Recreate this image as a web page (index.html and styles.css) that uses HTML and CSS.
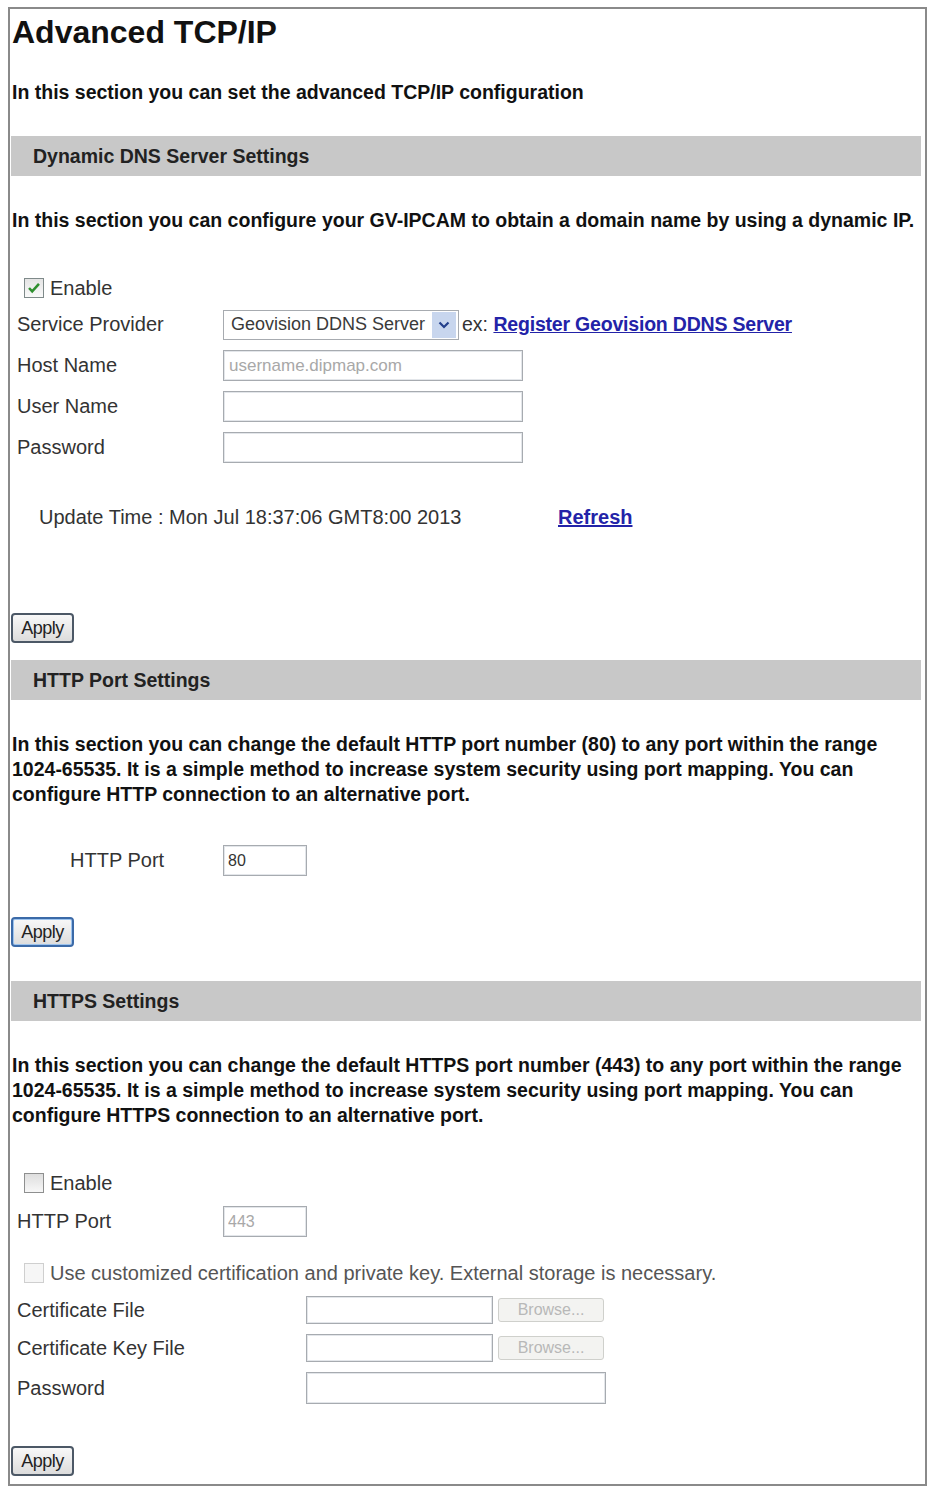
FILE: index.html
```html
<!DOCTYPE html>
<html lang="en">
<head>
  <meta charset="UTF-8">
  <title>Advanced TCP/IP</title>
  <link rel="stylesheet" href="styles.css">
</head>
<body>
<div class="page">
  <h1>Advanced TCP/IP</h1>
  <p class="intro">In this section you can set the advanced TCP/IP configuration</p>

  <!-- DDNS -->
  <div class="bar">Dynamic DNS Server Settings</div>
  <p class="desc">In this section you can configure your GV-IPCAM to obtain a domain name by using a dynamic IP.</p>
  <label class="check-row ddns-enable">
    <span class="cbox is-checked">
      <svg viewBox="0 0 20 20" width="20" height="20"><path d="M4.5 10l3.5 3.8L15.5 5.5" fill="none" stroke="#2f8f2f" stroke-width="2.8"/></svg>
    </span>
    Enable
  </label>
  <div class="form ddns-form">
    <div class="row">
      <span class="lbl">Service Provider</span>
      <span class="field">
        <span class="select">
          <span class="select-val">Geovision DDNS Server</span>
          <span class="select-btn">
            <svg viewBox="0 0 12 10" width="12" height="10"><path d="M1.5 2.5L6 7l4.5-4.5" fill="none" stroke="#24408c" stroke-width="2.2"/></svg>
          </span>
        </span>
        <span class="ex">ex: <a href="#">Register Geovision DDNS Server</a></span>
      </span>
    </div>
    <div class="row">
      <span class="lbl">Host Name</span>
      <span class="field"><input class="txt wide" type="text" placeholder="username.dipmap.com"></span>
    </div>
    <div class="row">
      <span class="lbl">User Name</span>
      <span class="field"><input class="txt wide" type="text"></span>
    </div>
    <div class="row">
      <span class="lbl">Password</span>
      <span class="field"><input class="txt wide" type="password"></span>
    </div>
  </div>
  <div class="update">
    <span class="update-time">Update Time : Mon Jul 18:37:06 GMT8:00 2013</span>
    <a href="#" class="refresh">Refresh</a>
  </div>
  <button class="btn apply-1">Apply</button>

  <!-- HTTP -->
  <div class="bar bar-http">HTTP Port Settings</div>
  <p class="desc">In this section you can change the default HTTP port number (80) to any port within the range 1024-65535. It is a simple method to increase system security using port mapping. You can configure HTTP connection to an alternative port.</p>
  <div class="row http-row">
    <span class="lbl lbl-indent">HTTP Port</span>
    <span class="field"><input class="txt port" type="text" value="80"></span>
  </div>
  <button class="btn is-focus apply-2">Apply</button>

  <!-- HTTPS -->
  <div class="bar bar-https">HTTPS Settings</div>
  <p class="desc">In this section you can change the default HTTPS port number (443) to any port within the range 1024-65535. It is a simple method to increase system security using port mapping. You can configure HTTPS connection to an alternative port.</p>
  <label class="check-row https-enable">
    <span class="cbox"></span>
    Enable
  </label>
  <div class="row https-port">
    <span class="lbl">HTTP Port</span>
    <span class="field"><input class="txt port is-disabled" type="text" value="443" disabled></span>
  </div>
  <label class="check-row cert-check">
    <span class="cbox is-disabled"></span>
    Use customized certification and private key. External storage is necessary.
  </label>
  <div class="form cert-form">
    <div class="row">
      <span class="lbl">Certificate File</span>
      <span class="field"><input class="txt file" type="text"><button class="browse" disabled>Browse...</button></span>
    </div>
    <div class="row">
      <span class="lbl">Certificate Key File</span>
      <span class="field"><input class="txt file" type="text"><button class="browse" disabled>Browse...</button></span>
    </div>
    <div class="row">
      <span class="lbl">Password</span>
      <span class="field"><input class="txt cert-pass" type="password"></span>
    </div>
  </div>
  <button class="btn apply-3">Apply</button>
</div>
</body>
</html>
```

FILE: styles.css
```css
*{ margin: 0; padding: 0; box-sizing: border-box;}
body{ font-family: "Liberation Sans", Arial, sans-serif; color: #111; background: #fff;}
a{ color: #2323a8;}

.page{ width: 919px; margin: 7px 0 0 8px; border: 2px solid #8a8a8a; padding: 0 4px 8px 1px;}

h1{ font-size: 32px; line-height: 40px; padding-top: 3px; padding-left: 1px; font-weight: bold; color: #111;}
.intro{ margin-top: 28px; font-size: 19.5px; line-height: 25px; font-weight: bold; padding-left: 1px;}

.bar{ height: 40px; background: #c8c8c8; display: flex; align-items: center; padding-left: 22px; font-size: 19.5px; font-weight: bold; color: #222;}
.intro + .bar{ margin-top: 31px;}
.desc{ margin-top: 32px; font-size: 19.5px; line-height: 25px; font-weight: bold; padding-left: 1px; padding-right: 2px;}

.check-row{ display: flex; align-items: center; height: 30px; padding-left: 13px; font-size: 20px; color: #333; gap: 6px;}
.cbox{ width: 20px; height: 20px; border: 1px solid #8e8f8f; background: linear-gradient(#dedede, #f7f7f7); display: flex; align-items: center; justify-content: center;}
.cbox.is-checked{ background: linear-gradient(#e4e4e4, #fafafa); border-color: #7f8a8a;}
.cbox.is-disabled{ border-color: #cfcfcf; background: #f6f6f6;}

.row{ display: flex; align-items: center; height: 41px;}
.lbl{ width: 212px; padding-left: 6px; font-size: 20px; color: #333; flex-shrink: 0;}
.field{ display: flex; align-items: center;}

.txt{ height: 31px; border: 1px solid #a7abb0; box-shadow: inset 0 0 0 1px #e3e6ea; font-family: inherit; font-size: 17px; color: #333; padding: 0 5px; background: #fff;}
.txt::placeholder{ color: #a8a8a8;}
.txt.wide{ width: 300px;}
.txt.port{ width: 84px; font-size: 16px; padding: 0 4px;}
.txt.is-disabled{ color: #a8a8a8; background: #fff;}

.select{ width: 236px; height: 30px; border: 1px solid #a7abb0; display: flex; align-items: center; justify-content: space-between; padding: 0 2px 0 7px; font-size: 18px; color: #3a3a3a;}
.select-btn{ width: 24px; height: 26px; background: #c8d6ee; display: flex; align-items: center; justify-content: center;}
.ex{ margin-left: 3px; font-size: 19.5px; color: #333;}
.ex a{ font-weight: bold; letter-spacing: -0.2px;}

.ddns-enable{ margin-top: 40px;}
.ddns-form{ margin-top: 1px;}

.update{ display: flex; align-items: center; height: 30px; margin-top: 34px; padding-left: 28px; font-size: 20px; color: #333;}
.update-time{ width: 519px;}
.refresh{ font-weight: bold;}

.btn{ display: block; width: 63px; height: 30px; border: 2px solid #4c5866; border-radius: 4px; background: linear-gradient(#f8f8f8, #dcdcdc); font-family: inherit; font-size: 18px; color: #222; letter-spacing: -0.5px;}
.btn.is-focus{ border-color: #3b6aa8; box-shadow: inset 0 0 0 1px #9cc3ee;}
.apply-1{ margin-top: 81px;}
.bar-http{ margin-top: 17px;}

.http-row{ height: 31px; margin-top: 38px;}
.lbl-indent{ padding-left: 59px;}
.apply-2{ margin-top: 41px;}
.bar-https{ margin-top: 34px;}

.https-enable{ margin-top: 40px;}
.https-port{ margin-top: 8px; height: 31px;}
.cert-check{ margin-top: 21px; color: #555;}
.cert-form{ margin-top: 3px;}
.cert-form .row{ height: 38px;}
.cert-form .row:last-child{ height: 42px;}
.cert-form .lbl{ width: 295px;}
.txt.file{ width: 187px; height: 28px;}
.txt.cert-pass{ width: 300px; height: 32px;}
.browse{ width: 106px; height: 24px; margin-left: 5px; border: 1px solid #cfd0cc; border-radius: 3px; background: #f3f3f1; font-family: inherit; font-size: 16px; color: #b8b8b8;}
.apply-3{ margin-top: 37px;}
```
